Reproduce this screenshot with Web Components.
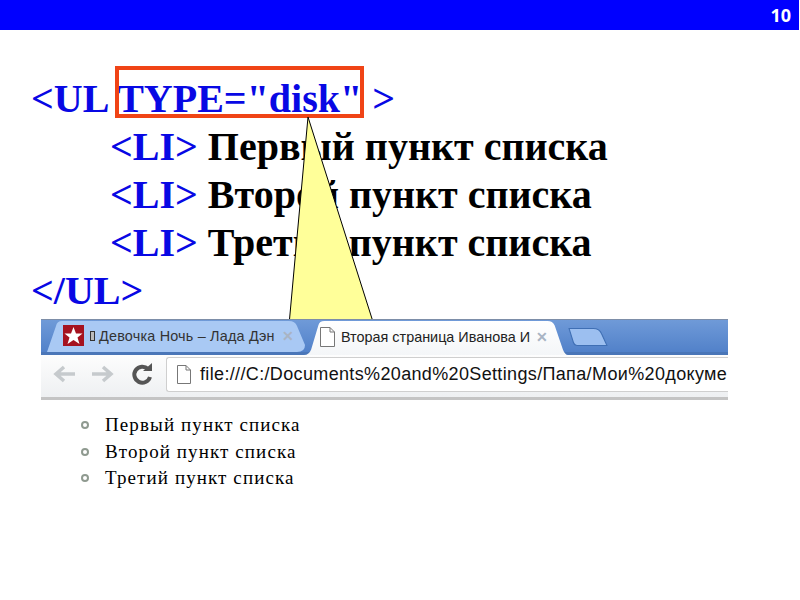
<!DOCTYPE html>
<html lang="ru">
<head>
<meta charset="utf-8">
<title>UL type disk</title>
<style>
html, body { margin: 0; padding: 0; background: #fff; }
</style>
</head>
<body>
<list-slide number="10">
    <code-line slot="code"><code-tag>&lt;UL</code-tag> <mark-box><code-tag>TYPE="disk"</code-tag></mark-box> <code-tag>&gt;</code-tag></code-line>
    <code-line slot="code" indent><code-tag>&lt;LI&gt;</code-tag> Первый пункт списка</code-line>
    <code-line slot="code" indent><code-tag>&lt;LI&gt;</code-tag> Второй пункт списка</code-line>
    <code-line slot="code" indent><code-tag>&lt;LI&gt;</code-tag> Третий пункт списка</code-line>
    <code-line slot="code"><code-tag>&lt;/UL&gt;</code-tag></code-line>
    <browser-shot slot="shot" url="file:///C:/Documents%20and%20Settings/Папа/Мои%20докуме">
        <browser-tab slot="tabs" title="Девочка Ночь – Лада Дэн" star></browser-tab>
        <browser-tab slot="tabs" title="Вторая страница Иванова И" active></browser-tab>
        <li-item>Первый пункт списка</li-item>
        <li-item>Второй пункт списка</li-item>
        <li-item>Третий пункт списка</li-item>
    </browser-shot>
</list-slide>

<script>
class ListSlide extends HTMLElement {
    connectedCallback(){
        const root = this.attachShadow({mode: 'open'});
        root.innerHTML = `<style>
:host { display: block; position: relative; width: 800px; height: 600px; overflow: hidden; background: #fff; }
header {
    height: 30px;
    width: 799px;
    background: #0000ff;
    color: #fff;
    display: flex;
    justify-content: flex-end;
    align-items: center;
    font: bold 18px "Open Sans", sans-serif;
    padding-right: 8px;
    box-sizing: border-box;
}
.code { display: flex; flex-direction: column; padding: 45px 0 0 31px; }
.shot { display: block; margin: 4px 0 0 41px; position: relative; z-index: 2; }
.callout { position: absolute; left: 280px; top: 110px; z-index: 1; }
</style>
<header>${this.getAttribute('number')}</header>
<div class="code"><slot name="code"></slot></div>
<svg class="callout" width="100" height="215" viewBox="280 110 100 215">
    <polygon points="308,117 289,325 374,325" fill="#ffff99" stroke="#000" stroke-width="1"/>
</svg>
<div class="shot"><slot name="shot"></slot></div>`;
    }
}

class CodeLine extends HTMLElement {
    connectedCallback(){
        const root = this.attachShadow({mode: 'open'});
        root.innerHTML = `<style>
:host {
    display: block;
    height: 48px;
    font: bold 40px/48px "Liberation Serif", serif;
    color: #000;
    white-space: pre;
}
:host([indent]) { padding-left: 79px; }
</style><slot></slot>`;
    }
}

class CodeTag extends HTMLElement {
    connectedCallback(){
        const root = this.attachShadow({mode: 'open'});
        root.innerHTML = `<style>:host { color: #0808e4; }</style><slot></slot>`;
    }
}

class MarkBox extends HTMLElement {
    connectedCallback(){
        const root = this.attachShadow({mode: 'open'});
        root.innerHTML = `<style>
:host { display: inline-block; position: relative; }
.box {
    position: absolute;
    left: -2px; right: -2px; top: -9px; bottom: 5px;
    border: 4px solid #f04416;
}
</style><slot></slot><div class="box"></div>`;
    }
}

class BrowserShot extends HTMLElement {
    connectedCallback(){
        const root = this.attachShadow({mode: 'open'});
        root.innerHTML = `<style>
:host { display: block; width: 687px; background: #fff; }
.strip {
    height: 36px;
    display: flex;
    padding: 1px 0 0 6px;
    box-sizing: border-box;
    background: linear-gradient(#6f9ad8, #4f7fc8);
    border-top: 1px solid #7d8ea8;
    position: relative;
    box-shadow: inset 0 -3px 0 #4a76b8;
}
.newtab { flex: none; width: 40px; height: 18px; margin: 7px 0 0 0; }
.toolbar {
    height: 45px;
    display: flex;
    align-items: center;
    box-sizing: border-box;
    padding: 0 0 4px 10px;
    background: linear-gradient(#fdfdfd, #eef0f2);
    border-bottom: 3px solid #c4c4c4;
}
.nav { flex: none; display: block; }
.omni {
    flex: 1;
    min-width: 0;
    height: 35px;
    margin-left: 8px;
    background: #fff;
    border: 1px solid #cfcfcf;
    border-right: 0;
    border-radius: 3px 0 0 3px;
    display: flex;
    align-items: center;
    box-sizing: border-box;
    padding-left: 10px;
    gap: 9px;
}
.omni svg { flex: none; }
.url { font: 18px "Liberation Sans", sans-serif; letter-spacing: .35px; color: #111; white-space: nowrap; padding-top: 1px; }
.page { display: flex; flex-direction: column; padding: 12px 0 0 40px; }
</style>
<div class="strip">
    <slot name="tabs"></slot>
    <svg class="newtab" viewBox="0 0 38 18" preserveAspectRatio="none"><path d="M1 .5H24Q30 .5 32 6L37 17.5H9Q6 17.5 5 14Z" fill="#9cbff0" stroke="#3f6fb4"/></svg>
</div>
<div class="toolbar">
    <svg class="nav" width="107" height="26" viewBox="0 0 107 26">
        <path d="M24 13H6M13 6L5 13L13 20" fill="none" stroke="#c6cacd" stroke-width="3.5"/>
        <path d="M41 13H59M52 6L60 13L52 20" fill="none" stroke="#c6cacd" stroke-width="3.5"/>
        <path d="M97 8A8 8 0 1 0 99 16" fill="none" stroke="#555" stroke-width="4"/>
        <path d="M92 10H101V2Z" fill="#555"/>
    </svg>
    <div class="omni">
        <svg width="14" height="19" viewBox="0 0 14 19"><path d="M.5.5H9L13.5 5V18.5H.5ZM9 .5V5H13.5" fill="#fff" stroke="#777"/></svg>
        <span class="url">${this.getAttribute('url')}</span>
    </div>
</div>
<div class="page"><slot></slot></div>`;
    }
}

class BrowserTab extends HTMLElement {
    connectedCallback(){
        const root = this.attachShadow({mode: 'open'});
        const active = this.hasAttribute('active');
        const icon = this.hasAttribute('star')
            ? `<svg class="icon" width="21" height="21" viewBox="0 0 21 21"><rect width="21" height="21" fill="#a5121f"/><path d="M10.5 2L13 8.5H19.5L14.5 12.5L16.5 19L10.5 15L4.5 19L6.5 12.5L1.5 8.5H8Z" fill="#fff"/></svg><svg class="icon" width="5" height="10" viewBox="0 0 5 10" style="margin-left:2px"><rect x=".5" y=".5" width="4" height="9" fill="#bbb" stroke="#333"/></svg>`
            : `<svg class="icon" width="15" height="20" viewBox="0 0 15 20"><path d="M.5.5H10L14.5 5V19.5H.5ZM10 .5V5H14.5" fill="#fff" stroke="#777"/></svg>`;
        root.innerHTML = `<style>
:host {
    display: flex;
    position: relative;
    flex: none;
    align-items: center;
    box-sizing: border-box;
    width: 258px;
    height: 31px;
    padding: 0 11px 2px 16px;
    gap: 4px;
    font: 14.4px "Liberation Sans", sans-serif;
    letter-spacing: .2px;
    color: #333;
    white-space: nowrap;
}
:host([active]) { height: 34px; width: 264px; margin-left: -1px; padding: 0 21px 2px 16px; letter-spacing: 0; color: #222; z-index: 1; gap: 6px; }
.bg { position: absolute; left: 0; top: 0; width: 100%; height: 100%; }
.icon, .title, .close { position: relative; flex: none; }
.close { color: #a9b4c4; font: bold 14px "Liberation Sans", sans-serif; margin-left: auto; }
</style>
<svg class="bg" viewBox="0 0 258 31" preserveAspectRatio="none">
    ${active
        ? `<path d="M0 31Q5 31 7 26L14 4Q15 0 20 0H238Q243 0 245 4L253 26Q255 31 258 31Z" fill="url(#g)"/>
           <defs><linearGradient id="g" x1="0" y1="0" x2="0" y2="1"><stop offset="0" stop-color="#fff"/><stop offset="1" stop-color="#f4f6f8"/></linearGradient></defs>`
        : `<path d="M0 31L9 5Q10 0 15 0H242Q248 0 250 5L258 24Q258 31 250 31Z" fill="#a9c9f4"/>`}
</svg>
${icon}<span class="title">${this.getAttribute('title')}</span><span class="close">✕</span>`;
    }
}

class LiItem extends HTMLElement {
    connectedCallback(){
        const root = this.attachShadow({mode: 'open'});
        root.innerHTML = `<style>
:host {
    display: flex;
    align-items: center;
    height: 26.5px;
    gap: 16px;
    font: 19px "Liberation Serif", serif;
    letter-spacing: 1.1px;
    color: #000;
}
.dot { width: 4px; height: 4px; border: 2px solid #8f9a90; border-radius: 50%; flex: none; }
</style><span class="dot"></span><slot></slot>`;
    }
}

customElements.define('list-slide', ListSlide);
customElements.define('code-line', CodeLine);
customElements.define('code-tag', CodeTag);
customElements.define('mark-box', MarkBox);
customElements.define('browser-shot', BrowserShot);
customElements.define('browser-tab', BrowserTab);
customElements.define('li-item', LiItem);
</script>
</body>
</html>
